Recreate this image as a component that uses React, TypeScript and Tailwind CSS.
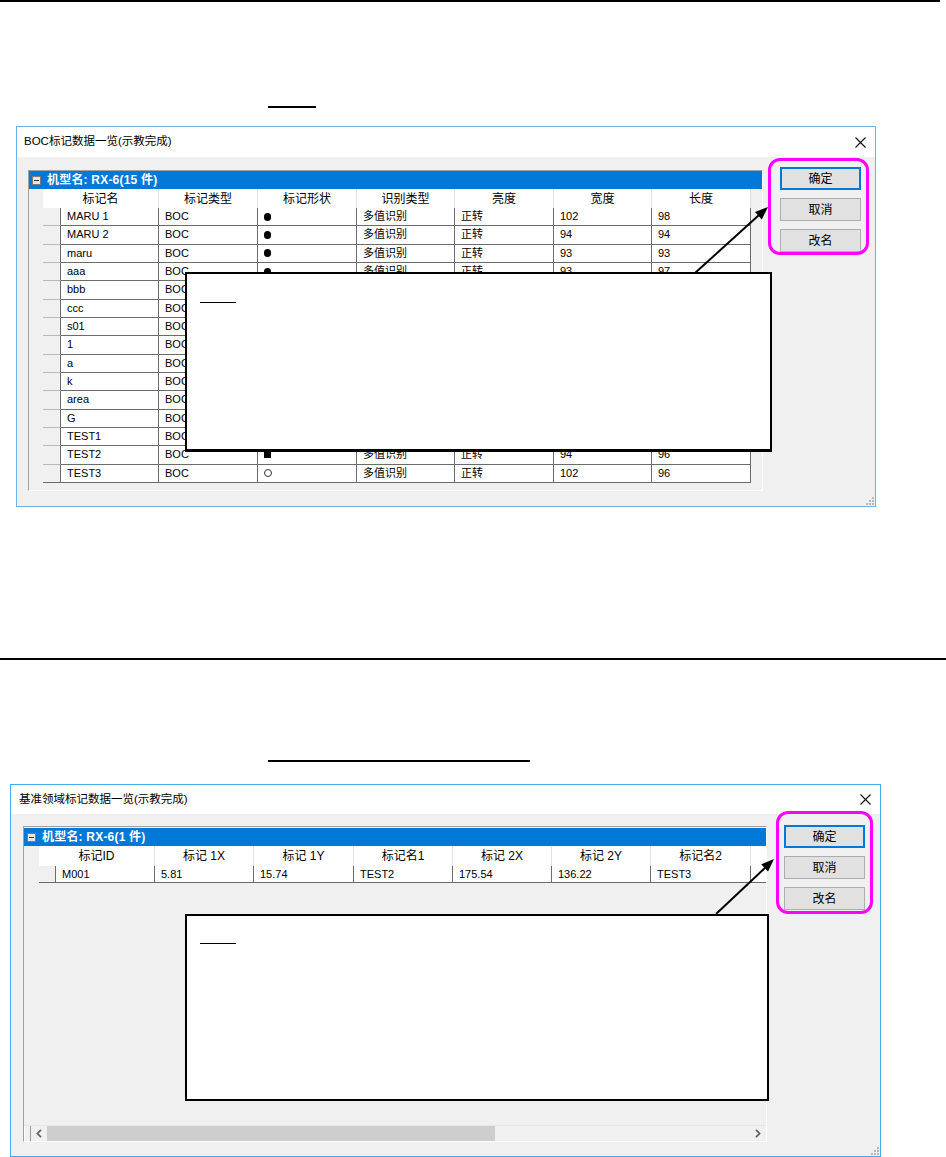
import React from "react";

type Shape = "dot" | "sq" | "ring";
type Row1 = [string, string, Shape, string, string, string, string];

const rows1: Row1[] = [
  ["MARU 1", "BOC", "dot", "多值识别", "正转", "102", "98"],
  ["MARU 2", "BOC", "dot", "多值识别", "正转", "94", "94"],
  ["maru", "BOC", "dot", "多值识别", "正转", "93", "93"],
  ["aaa", "BOC", "dot", "多值识别", "正转", "93", "97"],
  ["bbb", "BOC", "dot", "多值识别", "正转", "93", "95"],
  ["ccc", "BOC", "dot", "多值识别", "正转", "93", "95"],
  ["s01", "BOC", "dot", "多值识别", "正转", "93", "95"],
  ["1", "BOC", "dot", "多值识别", "正转", "93", "95"],
  ["a", "BOC", "dot", "多值识别", "正转", "93", "95"],
  ["k", "BOC", "dot", "多值识别", "正转", "93", "95"],
  ["area", "BOC", "dot", "多值识别", "正转", "93", "95"],
  ["G", "BOC", "dot", "多值识别", "正转", "93", "95"],
  ["TEST1", "BOC", "sq", "多值识别", "正转", "94", "96"],
  ["TEST2", "BOC", "sq", "多值识别", "正转", "94", "96"],
  ["TEST3", "BOC", "ring", "多值识别", "正转", "102", "96"],
];

const W1 = ["w-[98px]", "w-[99px]", "w-[99px]", "w-[98px]", "w-[99px]", "w-[98px]", "w-[99px]"];
const H1 = ["标记名", "标记类型", "标记形状", "识别类型", "亮度", "宽度", "长度"];
const H1W = ["w-[116px]", "w-[99px]", "w-[99px]", "w-[98px]", "w-[99px]", "w-[98px]", "w-[99px]"];

const W2 = ["w-[99px]", "w-[99px]", "w-[100px]", "w-[99px]", "w-[99px]", "w-[99px]", "w-[100px]"];
const H2 = ["标记ID", "标记 1X", "标记 1Y", "标记名1", "标记 2X", "标记 2Y", "标记名2"];
const H2W = ["w-[116px]", "w-[99px]", "w-[100px]", "w-[99px]", "w-[99px]", "w-[99px]", "w-[100px]"];
const R2 = ["M001", "5.81", "15.74", "TEST2", "175.54", "136.22", "TEST3"];

function ShapeMark({ s }: { s: Shape }) {
  if (s === "dot") return <span className="inline-block w-[7px] h-[8px] rounded-full bg-black" />;
  if (s === "sq") return <span className="inline-block w-[7px] h-[7px] bg-black" />;
  return <span className="inline-block w-[8px] h-[8px] rounded-full border border-[#333333] bg-white" />;
}

function CloseX() {
  return (
    <svg width="11" height="11" viewBox="0 0 11 11" className="block">
      <path d="M0.5 0.5 L10.5 10.5 M10.5 0.5 L0.5 10.5" stroke="#111" strokeWidth="1.1" />
    </svg>
  );
}

function Grip() {
  return (
    <svg width="8" height="8" viewBox="0 0 8 8" className="block">
      <rect x="6" y="0" width="2" height="2" fill="#b8b8b8" />
      <rect x="3" y="3" width="2" height="2" fill="#b8b8b8" />
      <rect x="6" y="3" width="2" height="2" fill="#b8b8b8" />
      <rect x="0" y="6" width="2" height="2" fill="#b8b8b8" />
      <rect x="3" y="6" width="2" height="2" fill="#b8b8b8" />
      <rect x="6" y="6" width="2" height="2" fill="#b8b8b8" />
    </svg>
  );
}

function GroupHeader({ text }: { text: string }) {
  return (
    <div className="h-[18px] bg-[#0078d7] flex items-center pl-[3px] shrink-0">
      <span className="w-[9px] h-[9px] border border-[#7a7a7a] bg-[#e6e6e6] flex items-center justify-center">
        <span className="w-[5px] h-px bg-[#333333]" />
      </span>
      <span className="ml-[6px] text-white font-bold text-[12px] leading-none whitespace-nowrap tracking-[0.2px]">{text}</span>
    </div>
  );
}

function Buttons() {
  return (
    <div className="flex flex-col gap-[8px]">
      <button className="w-[81px] h-[23px] bg-[#e1e1e1] border-2 border-[#0078d7] text-[12px] leading-none text-black flex items-center justify-center">
        确定
      </button>
      <button className="w-[81px] h-[23px] bg-[#e1e1e1] border border-[#adadad] text-[12px] leading-none text-black flex items-center justify-center">
        取消
      </button>
      <button className="w-[81px] h-[23px] bg-[#e1e1e1] border border-[#adadad] text-[12px] leading-none text-black flex items-center justify-center">
        改名
      </button>
    </div>
  );
}

const cell =
  "h-full border-r border-b border-[#6b6b6b] flex items-center pl-[6px] text-[11px] leading-none whitespace-nowrap overflow-hidden shrink-0 bg-white";

function Dialog1() {
  return (
    <div className="relative ml-[16px] mt-[18px] w-[860px] h-[381px] border border-[#6fb3e6] flex flex-col bg-white">
      <div className="h-[30px] flex items-center justify-between pl-[7px] pr-[9px] shrink-0">
        <span className="text-[11.5px] leading-none text-black">BOC标记数据一览(示教完成)</span>
        <CloseX />
      </div>
      <div className="flex-1 bg-[#f0f0f0] flex items-start">
        <div className="ml-[11px] mt-[13px] w-[735px] h-[321px] border-t border-l border-[#a0a0a0] border-b-white border-r-white border-b border-r flex flex-col">
          <GroupHeader text="机型名: RX-6(15 件)" />
          <div className="h-[19px] flex shrink-0">
            <div className="w-[14px] shrink-0" />
            {H1.map((h, i) => (
              <div
                key={h}
                className={`${H1W[i]} shrink-0 h-full bg-white border-r border-[#e3e3e3] flex items-center justify-center text-[12px] leading-none`}
              >
                {h}
              </div>
            ))}
            <div className="flex-1" />
          </div>
          <div className="h-[275px] flex flex-col shrink-0">
            {rows1.map((r, ri) => (
              <div key={ri} className="flex-1 flex">
                <div className="w-[14px] shrink-0" />
                <div
                  className={`w-[18px] shrink-0 h-full border-r border-r-[#6b6b6b] border-b ${
                    ri === rows1.length - 1 ? "border-b-[#6b6b6b]" : "border-b-[#b9b9b9]"
                  }`}
                />
                <div className={`${W1[0]} ${cell}`}>{r[0]}</div>
                <div className={`${W1[1]} ${cell}`}>{r[1]}</div>
                <div className={`${W1[2]} ${cell}`}>
                  <ShapeMark s={r[2]} />
                </div>
                <div className={`${W1[3]} ${cell}`}>{r[3]}</div>
                <div className={`${W1[4]} ${cell}`}>{r[4]}</div>
                <div className={`${W1[5]} ${cell}`}>{r[5]}</div>
                <div className={`${W1[6]} ${cell}`}>{r[6]}</div>
                <div className="flex-1" />
              </div>
            ))}
          </div>
          <div className="flex-1" />
        </div>
        <div className="ml-[17px] mt-[10px]">
          <Buttons />
        </div>
      </div>
      <div className="absolute right-[1px] bottom-[1px]">
        <Grip />
      </div>
    </div>
  );
}

function Dialog2() {
  return (
    <div className="relative ml-[10px] mt-[22px] w-[871px] h-[373px] border border-[#4aaaf0] flex flex-col bg-white">
      <div className="h-[29px] flex items-center justify-between pl-[8px] pr-[9px] shrink-0">
        <span className="text-[11.5px] leading-none text-black">基准领域标记数据一览(示教完成)</span>
        <CloseX />
      </div>
      <div className="flex-1 bg-[#f0f0f0] flex items-start">
        <div className="ml-[12px] mt-[12px] w-[744px] h-[316px] border-t border-l border-[#a0a0a0] border-b-white border-r-white border-b border-r flex flex-col pt-[1px]">
          <GroupHeader text="机型名: RX-6(1 件)" />
          <div className="h-[20px] flex shrink-0 overflow-hidden">
            <div className="w-[15px] shrink-0" />
            {H2.map((h, i) => (
              <div
                key={h}
                className={`${H2W[i]} shrink-0 h-full bg-white border-r border-[#e3e3e3] flex items-center justify-center text-[12px] leading-none whitespace-pre`}
              >
                {h}
              </div>
            ))}
            <div className="flex-1 bg-white" />
          </div>
          <div className="h-[17px] flex shrink-0 overflow-hidden">
            <div className="w-[15px] shrink-0" />
            <div className="w-[17px] shrink-0 h-full border-r border-b border-[#6b6b6b]" />
            {R2.map((v, i) => (
              <div key={i} className={`${W2[i]} ${cell}`}>
                {v}
              </div>
            ))}
            <div className="flex-1 h-full bg-white border-b border-[#6b6b6b]" />
          </div>
          <div className="flex-1" />
          <div className="h-[16px] flex shrink-0 bg-[#f0f0f0] border-t border-[#e6e6e6]">
            <div className="w-[7px] shrink-0 h-full border-l border-l-white border-r border-r-[#9a9a9a] bg-[#f0f0f0]" />
            <div className="w-[16px] shrink-0 h-full flex items-center justify-center">
              <svg width="6" height="9" viewBox="0 0 6 9" className="block">
                <path d="M5 0.8 L1.4 4.5 L5 8.2" stroke="#606060" strokeWidth="1.7" fill="none" />
              </svg>
            </div>
            <div className="w-[448px] shrink-0 h-full bg-[#cdcdcd]" />
            <div className="flex-1" />
            <div className="w-[16px] shrink-0 h-full flex items-center justify-center">
              <svg width="6" height="9" viewBox="0 0 6 9" className="block">
                <path d="M1 0.8 L4.6 4.5 L1 8.2" stroke="#606060" strokeWidth="1.7" fill="none" />
              </svg>
            </div>
          </div>
        </div>
        <div className="ml-[17px] mt-[11px]">
          <Buttons />
        </div>
      </div>
      <div className="absolute right-[1px] bottom-[1px]">
        <Grip />
      </div>
    </div>
  );
}

export default function App() {
  return (
    <div className="relative w-[946px] h-[1157px] bg-white overflow-hidden text-black font-['Liberation_Sans','Noto_Sans_CJK_SC',sans-serif]">
      <div className="h-[2px] w-[940px] bg-black" />
      <div className="ml-[268px] mt-[104px] h-[2px] w-[48px] bg-black" />
      <Dialog1 />
      <div className="mt-[151px] h-[2px] w-[946px] bg-black" />
      <div className="ml-[268px] mt-[100px] h-[2px] w-[262px] bg-black" />
      <Dialog2 />

      {/* annotations */}
      <div className="absolute left-[768px] top-[158px] w-[101px] h-[97px] border-[3px] border-[#ff00ff] rounded-[12px]" />
      <div className="absolute left-[776px] top-[811px] w-[97px] h-[103px] border-[3px] border-[#ff00ff] rounded-[12px]" />

      <div className="absolute left-[185px] top-[272px] w-[587px] h-[180px] bg-white border-2 border-b-[3px] border-black pl-[13px] pt-[28px]">
        <div className="w-[36px] h-px bg-black" />
      </div>
      <div className="absolute left-[185px] top-[914px] w-[584px] h-[187px] bg-white border-2 border-black pl-[13px] pt-[27px]">
        <div className="w-[36px] h-px bg-black" />
      </div>

      <svg className="absolute left-0 top-0 pointer-events-none" width="946" height="1157" viewBox="0 0 946 1157">
        <line x1="695" y1="273" x2="759" y2="215" stroke="#000" strokeWidth="2" />
        <polygon points="768,207 761.8,219.4 755,212" fill="#000" />
        <line x1="716" y1="914" x2="766" y2="867" stroke="#000" strokeWidth="2" />
        <polygon points="774,859 768,871.5 761.2,864.3" fill="#000" />
      </svg>
    </div>
  );
}
